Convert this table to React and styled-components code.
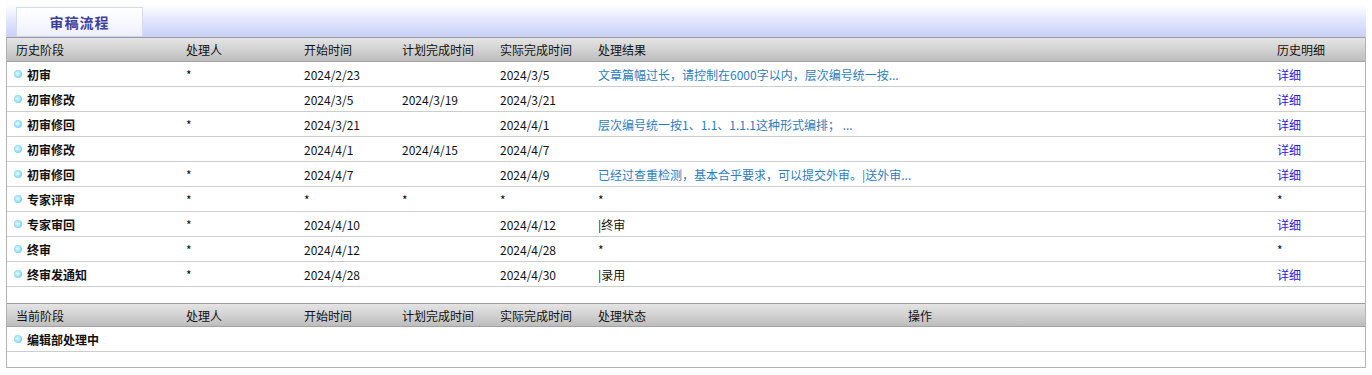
import React from "react";
import styled, { createGlobalStyle } from "styled-components";

const Global = createGlobalStyle`
  html, body { margin: 0; padding: 0; background: #fff; }
  body { font-family: "Microsoft YaHei", "Noto Sans CJK SC", "Noto Sans", sans-serif; font-size: 12px; color: #111; }
`;

const Page = styled.div`
  padding: 5px 6px 0 6px;
  width: 1360px;
`;

const TabBand = styled.div`
  height: 32px;
  background: linear-gradient(to bottom, #ffffff 0%, #e6eafd 40%, #c9d0fb 100%);
  display: flex;
  align-items: flex-end;
  padding-left: 10px;
`;

const Tab = styled.div`
  width: 125px;
  height: 28px;
  margin-bottom: 1px;
  border: 1px solid #d6daef;
  border-bottom: none;
  background: linear-gradient(to bottom, #ffffff 0%, #f6f7fe 60%, #eceefc 100%);
  display: flex;
  align-items: center;
  justify-content: center;
  font-size: 14px;
  font-weight: bold;
  color: #3b3f9e;
  letter-spacing: 1px;
`;

const Frame = styled.div`
  border-left: 1px solid #b4b4b4;
  border-right: 1px solid #b4b4b4;
  border-bottom: 1px solid #b4b4b4;
`;

const Row = styled.div`
  display: grid;
  grid-template-columns: ${(p) => p.$cols};
  height: 25px;
  align-items: center;
  border-bottom: 1px solid #cdcdcd;
  box-sizing: border-box;
`;

const HeadRow = styled(Row)`
  background: linear-gradient(to bottom, #e4e4e4 0%, #d2d2d2 50%, #bdbdbd 100%);
  border-top: 1px solid #9c9c9c;
  border-bottom: 1px solid #a3a3a3;
  height: ${(p) => p.$h || 25}px;
  color: #222;
`;

const Spacer = styled.div`
  height: ${(p) => p.$h}px;
`;

const Cell = styled.div`
  padding-left: 9px;
  white-space: nowrap;
  overflow: hidden;
  color: ${(p) => p.$color || "#111"};
`;

const StageCell = styled.div`
  display: flex;
  align-items: center;
  gap: 5px;
  padding-left: 7px;
  font-weight: bold;
  color: #111;
`;

const Dot = styled.span`
  width: 8px;
  height: 8px;
  border-radius: 50%;
  background: radial-gradient(circle at 45% 45%, #eefbff 0%, #a8e6fb 40%, #4fbde9 100%);
  display: inline-block;
`;

const HIST = "170px 118px 98px 98px 98px 1fr 97px";
const CUR = "170px 118px 98px 98px 98px 310px 1fr";

const RES = "#2f7cbc";
const LINK = "#2323e6";

const history = [
  ["初审", "*", "2024/2/23", "", "2024/3/5", "文章篇幅过长，请控制在6000字以内，层次编号统一按...", RES, "详细"],
  ["初审修改", "", "2024/3/5", "2024/3/19", "2024/3/21", "", RES, "详细"],
  ["初审修回", "*", "2024/3/21", "", "2024/4/1", "层次编号统一按1、1.1、1.1.1这种形式编排； ...", RES, "详细"],
  ["初审修改", "", "2024/4/1", "2024/4/15", "2024/4/7", "", RES, "详细"],
  ["初审修回", "*", "2024/4/7", "", "2024/4/9", "已经过查重检测，基本合乎要求，可以提交外审。|送外审...", RES, "详细"],
  ["专家评审", "*", "*", "*", "*", "*", "#111", "*"],
  ["专家审回", "*", "2024/4/10", "", "2024/4/12", "|终审", "#111", "详细"],
  ["终审", "*", "2024/4/12", "", "2024/4/28", "*", "#111", "*"],
  ["终审发通知", "*", "2024/4/28", "", "2024/4/30", "|录用", "#111", "详细"],
];

export default function App() {
  return (
    <Page>
      <Global />
      <TabBand>
        <Tab>审稿流程</Tab>
      </TabBand>
      <Frame>
        <HeadRow $cols={HIST}>
          <Cell>历史阶段</Cell>
          <Cell>处理人</Cell>
          <Cell>开始时间</Cell>
          <Cell>计划完成时间</Cell>
          <Cell>实际完成时间</Cell>
          <Cell>处理结果</Cell>
          <Cell>历史明细</Cell>
        </HeadRow>
        {history.map((r, i) => (
          <Row key={i} $cols={HIST}>
            <StageCell>
              <Dot />
              {r[0]}
            </StageCell>
            <Cell>{r[1]}</Cell>
            <Cell>{r[2]}</Cell>
            <Cell>{r[3]}</Cell>
            <Cell>{r[4]}</Cell>
            <Cell $color={r[6]}>{r[5]}</Cell>
            <Cell $color={r[7] === "详细" ? LINK : "#111"}>{r[7]}</Cell>
          </Row>
        ))}
        <Spacer $h={16} />
        <HeadRow $cols={CUR} $h={24}>
          <Cell>当前阶段</Cell>
          <Cell>处理人</Cell>
          <Cell>开始时间</Cell>
          <Cell>计划完成时间</Cell>
          <Cell>实际完成时间</Cell>
          <Cell>处理状态</Cell>
          <Cell>操作</Cell>
        </HeadRow>
        <Row $cols={CUR}>
          <StageCell>
            <Dot />
            编辑部处理中
          </StageCell>
          <Cell />
          <Cell />
          <Cell />
          <Cell />
          <Cell />
          <Cell />
        </Row>
        <Spacer $h={15} />
      </Frame>
    </Page>
  );
}
